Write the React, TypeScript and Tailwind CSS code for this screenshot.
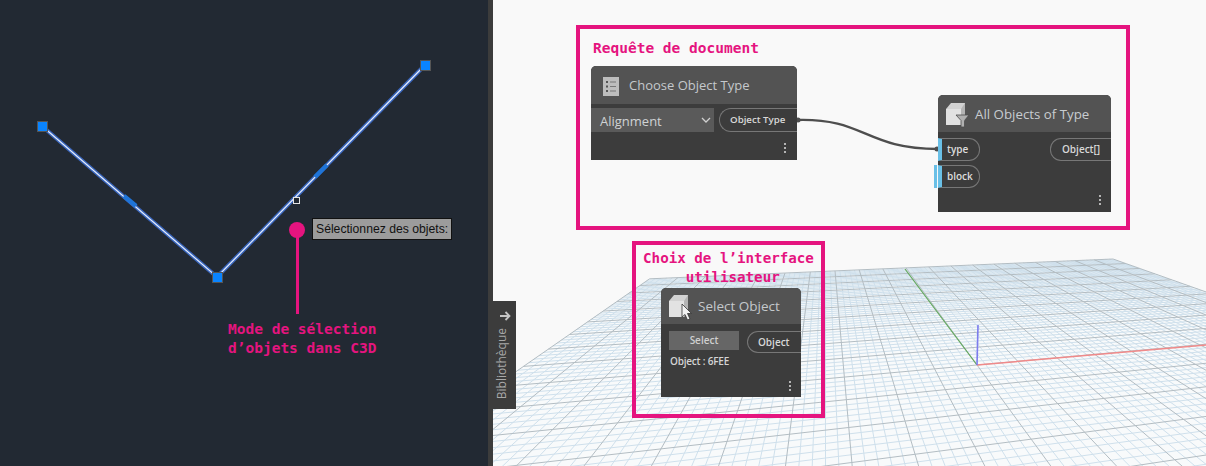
import React from "react";

const uiFont = "font-['Open_Sans','Liberation_Sans',sans-serif]";
const noteFont = "font-['DejaVu_Sans_Mono','Liberation_Mono',monospace]";

// floor grid: projective map from plan coords (u, v) to canvas pixels
function project(u: number, v: number) {
  const w = 0.2 * u + 0.876 * v + 1;
  return {
    x: (611 * u + 722.7 * v + 977) / w - 493,
    y: (35.2 * u + 137.5 * v + 365) / w,
  };
}

function buildGrid() {
  const minor: string[] = [];
  const major: string[] = [];
  const vMin = -0.7;
  for (let i = -50; i <= 50; i++) {
    const t = i / 50;
    const a = project(t, vMin);
    const b = project(t, 1);
    const c = project(-1, t);
    const d = project(1, t);
    const target = i % 5 === 0 ? major : minor;
    target.push(`M${a.x} ${a.y}L${b.x} ${b.y}`);
    if (t >= vMin) target.push(`M${c.x} ${c.y}L${d.x} ${d.y}`);
  }
  return { minor: minor.join(""), major: major.join(""), floor: floorPath() };
}

function floorPath() {
  const pts = [project(-1, -0.7), project(-1, 1), project(1, 1), project(1, -0.7)];
  return "M" + pts.map((p) => `${p.x} ${p.y}`).join("L") + "Z";
}

function FloorGrid() {
  const grid = buildGrid();
  return (
    <svg className="absolute inset-0" width="713" height="466" viewBox="0 0 713 466">
      <path d={grid.floor} fill="#f8fafb" />
      <path d={grid.minor} stroke="#cfe0ec" strokeWidth="1" fill="none" />
      <path d={grid.major} stroke="#b3bdc3" strokeWidth="1" fill="none" />
      <path d="M412 269L484 365" stroke="#64a85e" strokeWidth="1.2" fill="none" />
      <path d="M484 365L713 345" stroke="#f08a8a" strokeWidth="1.5" fill="none" />
      <path d="M484 365L485 325" stroke="#7c7cee" strokeWidth="1.6" fill="none" />
      {/* wire between the two top nodes */}
      <path d="M304 120C372 118 372 149 445 149" stroke="#4e4e4e" strokeWidth="2.4" fill="none" />
      <circle cx="305" cy="120" r="2.5" fill="#4e4e4e" />
      <circle cx="444" cy="149" r="2.5" fill="#4e4e4e" />
    </svg>
  );
}

function Dots() {
  return (
    <div className="flex flex-col items-center gap-[2px] w-[3px]">
      <span className="w-[2px] h-[2px] bg-[#b5b5b5]" />
      <span className="w-[2px] h-[2px] bg-[#b5b5b5]" />
      <span className="w-[2px] h-[2px] bg-[#b5b5b5]" />
    </div>
  );
}

function ListIcon() {
  return (
    <svg width="16" height="19" viewBox="0 0 16 19">
      <rect width="16" height="19" fill="#bdbdbd" />
      <path d="M3 5h2M3 9.5h2M3 14h2" stroke="#555" strokeWidth="2" />
      <path d="M7 5h6M7 9.5h6M7 14h6" stroke="#777" strokeWidth="1.2" />
    </svg>
  );
}

function CubeIcon({ funnel, cursor }: { funnel?: boolean; cursor?: boolean }) {
  return (
    <svg width="24" height="26" viewBox="0 0 24 26">
      <path d="M1 7L6 1H20V18L16 23H1Z" fill="#d2d2d2" />
      <path d="M1 7H16V23H2Q1 23 1 22Z" fill="#e2e2e2" />
      <path d="M16 7L20 1V18L16 23Z" fill="#b4b4b4" />
      {funnel && <path d="M11 13H24L19.5 18.5V25H16V18.5Z" fill="#b0b0b0" stroke="#4c4c4c" strokeWidth="0.8" />}
      {cursor && <path d="M14 10V23L17 20.5L19.5 26L22 25L19.5 19.5H23.5Z" fill="#f2f2f2" stroke="#333" strokeWidth="0.8" />}
    </svg>
  );
}

function App() {
  return (
    <div className={`flex w-[1206px] h-[466px] overflow-hidden bg-[#f9f9f9] ${uiFont}`}>
      {/* Civil 3D viewport */}
      <div className="relative w-[488px] h-full bg-[#222933] shrink-0">
        <svg className="absolute inset-0" width="488" height="466" viewBox="0 0 488 466">
          <path d="M42 126L217 277L425 65" stroke="#3a66bd" strokeWidth="4" fill="none" />
          <path d="M42 126L217 277L425 65" stroke="#e4ecfb" strokeWidth="1.2" fill="none" />
          <path d="M124 196L136 206M315 177L327 165" stroke="#1f74d8" strokeWidth="4.5" fill="none" />
          <rect x="37.5" y="121.5" width="10" height="10" fill="#0a84ff" stroke="#555" />
          <rect x="212.5" y="272.5" width="10" height="10" fill="#0a84ff" stroke="#555" />
          <rect x="420.5" y="60.5" width="10" height="10" fill="#0a84ff" stroke="#555" />
          <rect x="293.5" y="197.5" width="6" height="6" fill="#222933" stroke="#e4e4e4" />
        </svg>
        {/* callout pin */}
        <div className="absolute left-[289px] top-[222px] flex flex-col items-center">
          <span className="w-4 h-4 rounded-full bg-[#e5147f]" />
          <span className="w-[3px] h-[77px] bg-[#e5147f] -mt-[1px]" />
        </div>
        <div className="absolute left-[312px] top-[218px] w-[140px] h-[22px] flex items-center pl-[3px] bg-[#9c9c9c] border border-[#111] text-[12.2px] text-[#111] font-['Liberation_Sans',sans-serif] whitespace-nowrap">
          Sélectionnez des objets:
        </div>
        <div className={`absolute left-[228px] top-[320px] ${noteFont} font-bold text-[14.5px] leading-[19px] text-[#e5147f] whitespace-pre`}>
          {"Mode de sélection\nd’objets dans C3D"}
        </div>
      </div>

      <div className="w-[5px] h-full bg-[#3c3c3c] shrink-0" />

      {/* Dynamo canvas */}
      <div className="relative flex-1 h-full">
        <FloorGrid />

        {/* library tab */}
        <div className="absolute left-0 top-[301px] w-[23px] h-[108px] bg-[#3c3c3c] flex flex-col items-center pt-[10px] gap-[7px]">
          <svg width="12" height="10" viewBox="0 0 12 10">
            <path d="M1 5H10M6.5 1L10.5 5L6.5 9" stroke="#c4c4c4" strokeWidth="1.8" fill="none" />
          </svg>
          <span className="[writing-mode:vertical-rl] rotate-180 -ml-[5px] text-[12px] leading-[14px] text-[#a8a8a8] whitespace-nowrap">
            Bibliothèque
          </span>
        </div>

        {/* Choose Object Type */}
        <div className="absolute left-[98px] top-[66px] w-[206px] h-[94px] bg-[#3c3c3c] rounded-t-[5px] flex flex-col">
          <div className="h-[38px] bg-[#535353] rounded-t-[5px] flex items-center gap-[10px] pl-[12px] pt-[2px]">
            <ListIcon />
            <span className="text-[13px] font-medium text-[#c4c8cc]">Choose Object Type</span>
          </div>
          <div className="flex gap-[5px] mt-[4px] h-[24px]">
            <div className="w-[123px] bg-[#5a5a5a] flex items-center justify-between pl-[9px] pr-[3px] pt-[3px] text-[13px] font-medium text-[#cfd2d4]">
              Alignment
              <svg className="-mt-[3px]" width="10" height="6" viewBox="0 0 10 6">
                <path d="M1 1L5 5L9 1" stroke="#d0d0d0" strokeWidth="1.3" fill="none" />
              </svg>
            </div>
            <div className="flex-1 border border-r-0 border-[#777] rounded-l-[12px] flex items-center pl-[10px] text-[9.7px] font-semibold text-[#d8d8d8] whitespace-nowrap">
              Object Type
            </div>
          </div>
          <div className="flex justify-end pr-[11px] mt-[11px]">
            <Dots />
          </div>
        </div>

        {/* All Objects of Type */}
        <div className="absolute left-[445px] top-[95px] w-[173px] h-[117px] bg-[#3c3c3c] rounded-t-[5px] flex flex-col">
          <div className="h-[37px] bg-[#535353] rounded-t-[5px] flex items-center gap-[6px] pl-[7px] pt-[2px]">
            <CubeIcon funnel />
            <span className="text-[13.3px] font-medium text-[#c8ccd0]">All Objects of Type</span>
          </div>
          <div className="flex justify-between mt-[6px] h-[23px]">
            <div className="w-[42px] bg-[#3c3c3c] border border-l-[4px] border-[#777] border-l-[#6ac0e7] rounded-r-[11px] flex items-center pl-[5px] text-[10px] font-semibold text-[#dcdcdc]">
              type
            </div>
            <div className="w-[61px] border border-r-0 border-[#777] rounded-l-[11px] flex items-center pl-[11px] text-[10px] font-semibold text-[#d8d8d8]">
              Object[]
            </div>
          </div>
          <div className="relative mt-[4px] h-[23px] w-[42px] border border-l-[4px] border-[#777] border-l-[#6ac0e7] rounded-r-[11px] flex items-center pl-[5px] text-[10px] font-semibold text-[#dcdcdc]">
            <span className="absolute -left-[8px] -top-[1px] w-[3px] h-[23px] bg-[#6ac0e7]" />
            block
          </div>
          <div className="flex justify-end pr-[10px] mt-[7px]">
            <Dots />
          </div>
        </div>

        {/* Select Object */}
        <div className="absolute left-[168px] top-[288px] w-[140px] h-[109px] bg-[#3c3c3c] rounded-t-[5px] flex flex-col">
          <div className="h-[36px] bg-[#535353] rounded-t-[5px] flex items-center gap-[6px] pl-[7px] pt-[1px]">
            <CubeIcon cursor />
            <span className="text-[13.5px] font-medium text-[#c4c8cc]">Select Object</span>
          </div>
          <div className="flex gap-[8px] mt-[7px] pl-[8px]">
            <div className="w-[70px] h-[19px] bg-[#666] flex items-center justify-center text-[10px] font-semibold text-[#cfcfcf]">
              Select
            </div>
            <div className="flex-1 h-[22px] border border-r-0 border-[#777] rounded-l-[11px] flex items-center pl-[10px] text-[10px] font-semibold text-[#d8d8d8]">
              Object
            </div>
          </div>
          <div className="mt-[1px] pl-[9px] text-[10px] tracking-[-0.2px] leading-[14px] font-semibold text-[#d4d4d4]">Object : 6FEE</div>
          <div className="flex justify-end pr-[10px] mt-[13px]">
            <Dots />
          </div>
        </div>

        {/* annotation frames */}
        <div className="absolute left-[83px] top-[25px] w-[554px] h-[205px] border-[4px] border-[#e5147f] pl-[13px] pt-[10px] pointer-events-none">
          <div className={`${noteFont} font-bold text-[14.5px] leading-[19px] text-[#e5147f]`}>Requête de document</div>
        </div>
        <div className="absolute left-[139px] top-[241px] w-[193px] h-[177px] border-[4px] border-[#e5147f] pt-[4px] pointer-events-none">
          <div className={`${noteFont} font-bold text-[14.2px] leading-[19px] text-[#e5147f] text-center whitespace-pre`}>
            {"Choix de l’interface\n utilisateur"}
          </div>
        </div>
      </div>
    </div>
  );
}

export default App;
